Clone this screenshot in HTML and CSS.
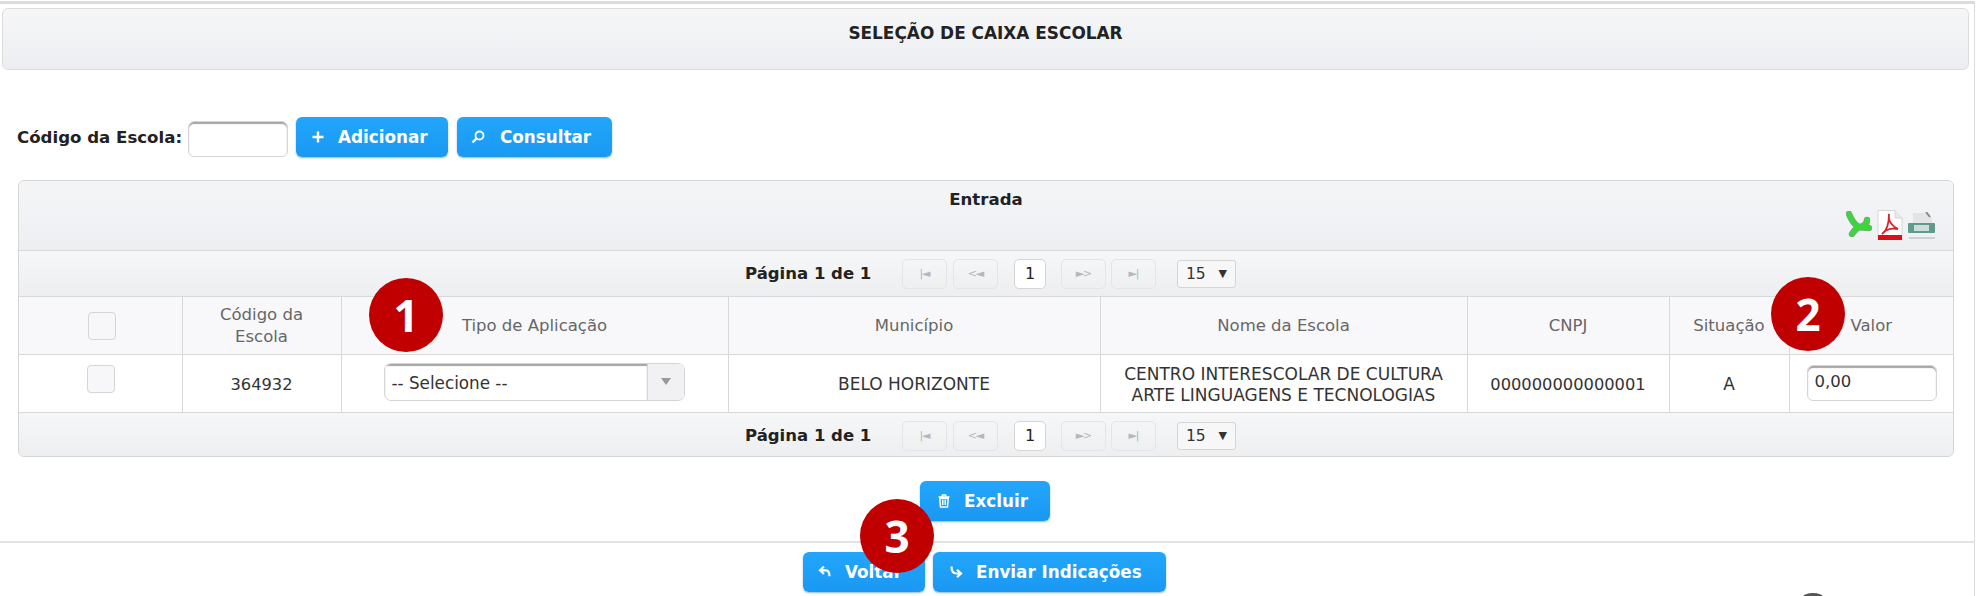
FILE: index.html
```html
<!DOCTYPE html>
<html lang="pt">
<head>
<meta charset="utf-8">
<title>Seleção de Caixa Escolar</title>
<link rel="stylesheet" href="styles.css">
</head>
<body>
<div class="page">
  <div class="title-bar">SELEÇÃO DE CAIXA ESCOLAR</div>
  <div class="search-row">
    <label class="field-label">Código da Escola:</label>
    <span class="input code-input"></span>
    <span class="btn btn-add"><svg class="ico" viewBox="0 0 16 16"><path d="M8 2.5v11M2.5 8h11" stroke="#fff" stroke-width="2.4" fill="none"/></svg>Adicionar</span>
    <span class="btn btn-search"><svg class="ico" viewBox="0 0 16 16"><circle cx="9.5" cy="6.5" r="4" stroke="#fff" stroke-width="1.8" fill="none"/><path d="M6.5 9.5 2.5 13.5" stroke="#fff" stroke-width="2.4" fill="none"/></svg>Consultar</span>
  </div>
  <div class="grid-panel">
    <div class="grid-caption">
      <span class="caption-text">Entrada</span>
      <div class="export-icons">
        <svg class="exp exp-xls" viewBox="0 0 26 26"><g fill="none" stroke-linecap="round" stroke="#7fa67f" stroke-width="6.500"><path d="M3 3C5 8 8 13 12 15.500 16 17 20 17 23 17"/><path d="M21 9C21 13 18 15 14 16 10 17 8 20 6 23"/></g><g fill="none" stroke-linecap="round" stroke="#37d837" stroke-width="4.500"><path d="M3 3C5 8 8 13 12 15.500 16 17 20 17 23 17"/><path d="M21 9C21 13 18 15 14 16 10 17 8 20 6 23"/></g></svg>
        <svg class="exp exp-pdf" viewBox="0 0 26 30"><path d="M1 .5h17L25 8v22H1Z" fill="#fff" stroke="#d5d5d5"/><path d="M18 .5V8h7" fill="#e8e8e8" stroke="#d5d5d5"/><path d="M12 4c-1 6 1 11 9 15-6-1-12 0-16 5 3-2 7-8 7-20Z" fill="none" stroke="#d8232a" stroke-width="1.800"/><rect x="1" y="25" width="24" height="5" fill="#d8101a"/></svg>
        <svg class="exp exp-csv" viewBox="0 0 28 27"><path d="M5 1h14l5 5v7H5Z" fill="#e4e4e4"/><path d="M18 0l4 5" stroke="#888" stroke-width="2"/><rect x="0" y="11" width="27" height="10" rx="1" fill="#5f9a8c"/><rect x="6" y="13" width="15" height="6" fill="#c9dfd8"/><rect x="1" y="25" width="26" height="2" fill="#d0d0d0"/></svg>
      </div>
    </div>
    <div class="pager pager-top">
      <b class="pager-text">Página 1 de 1</b>
      <span class="pg pg-a">|◄</span><span class="pg pg-b">&lt;◄</span>
      <span class="pg-cur">1</span>
      <span class="pg pg-c">►&gt;</span><span class="pg pg-d">►|</span>
      <span class="pg-size">15 <i>▼</i></span>
    </div>
    <table class="grid">
      <colgroup>
        <col class="c1"><col class="c2"><col class="c3"><col class="c4"><col class="c5"><col class="c6"><col class="c7"><col class="c8">
      </colgroup>
      <thead>
        <tr>
          <th><span class="check check-head"></span></th>
          <th>Código da<br>Escola</th>
          <th>Tipo de Aplicação</th>
          <th>Município</th>
          <th>Nome da Escola</th>
          <th>CNPJ</th>
          <th>Situação</th>
          <th>Valor</th>
        </tr>
      </thead>
      <tbody>
        <tr>
          <td><span class="check check-row"></span></td>
          <td class="num">364932</td>
          <td><div class="combo"><span class="combo-text">-- Selecione --</span><span class="combo-arrow"></span></div></td>
          <td>BELO HORIZONTE</td>
          <td>CENTRO INTERESCOLAR DE CULTURA<br>ARTE LINGUAGENS E TECNOLOGIAS</td>
          <td class="num">000000000000001</td>
          <td>A</td>
          <td><div class="input value-input">0,00</div></td>
        </tr>
      </tbody>
    </table>
    <div class="pager pager-bottom">
      <b class="pager-text">Página 1 de 1</b>
      <span class="pg pg-a">|◄</span><span class="pg pg-b">&lt;◄</span>
      <span class="pg-cur">1</span>
      <span class="pg pg-c">►&gt;</span><span class="pg pg-d">►|</span>
      <span class="pg-size">15 <i>▼</i></span>
    </div>
  </div>
  <div class="delete-row">
    <span class="btn btn-del"><svg class="ico" viewBox="0 0 16 16"><path d="M2.5 4h11M6 3.500 6.500 2h3l.5 1.500M3.800 5.500h8.400l-.7 8.500h-7Z" stroke="#fff" stroke-width="1.500" fill="none"/><path d="M6.500 7v5M8 7v5M9.500 7v5" stroke="#fff" stroke-width="1"/></svg>Excluir</span>
  </div>
  <div class="footer-row">
    <span class="btn btn-back"><svg class="ico" viewBox="0 0 16 16"><path d="M7 2.500 3 6.300l4 3.700M3.500 6.300H9c2.500 0 3.500 2 3.500 6" stroke="#fff" stroke-width="2.200" fill="none"/></svg>Voltar</span>
    <span class="btn btn-send"><svg class="ico" viewBox="0 0 16 16"><path d="M3.500 2.500c0 4.500 1.500 7 5 7h4M9 5.700l4 3.800-4 3.700" stroke="#fff" stroke-width="2.200" fill="none"/></svg>Enviar Indicações</span>
  </div>
  <span class="marker m1">1</span>
  <span class="marker m2">2</span>
  <span class="marker m3">3</span>
  <span class="cursor-tip"></span>
</div>
</body>
</html>
```
FILE: styles.css
```css
* { box-sizing: border-box; }
html, body { margin: 0; padding: 0; background: #fff; height: 596px; overflow: hidden; }
body { font-family: "DejaVu Sans", sans-serif; color: #333; }
.page {
  position: relative;
  width: 1975px;
  height: 596px;
  margin-top: 1px;
  border-top: 3px solid #dcdcdc;
  border-right: 1.5px solid #dcdcdc;
  overflow: hidden;
  padding: 4px 0 0 2px;
}
.title-bar {
  width: 1967px;
  height: 62px;
  border: 1px solid #dcdcdc;
  border-radius: 6px;
  background: linear-gradient(#f6f6f8, #eceef1);
  text-align: center;
  font-weight: bold;
  font-size: 16.900px;
  line-height: 1;
  color: #222;
  padding-top: 16px;
}
.search-row {
  display: flex;
  align-items: flex-start;
  height: 40px;
  margin-top: 47px;
  padding-left: 15px;
}
.field-label {
  width: 171px;
  font-size: 16.600px;
  font-weight: bold;
  line-height: 42px;
  color: #222;
  white-space: nowrap;
}
.input {
  display: block;
  border: 1px solid #d5d5d5;
  border-radius: 6px;
  background: #fff;
  box-shadow: inset 0 2px 1px #a5a5a5;
}
.code-input { width: 100px; height: 36px; margin-top: 4px; }
.btn {
  display: inline-flex;
  align-items: center;
  height: 40px;
  border-radius: 6px;
  background: linear-gradient(#22a6fb, #1a98f2);
  box-shadow: 0 1px 2px #8fb7d2;
  color: #fff;
  font-weight: bold;
  font-size: 16.800px;
  white-space: nowrap;
}
.ico { width: 16px; height: 16px; flex: none; margin-right: 12px; }
.btn-add { width: 152px; margin-left: 8px; padding-left: 14px; }
.btn-search { width: 155px; margin-left: 9px; padding-left: 13px; }
.btn-search .ico { margin-right: 14px; }
.grid-panel {
  width: 1936px;
  height: 277px;
  margin: 23px 0 0 16px;
  border: 1px solid #d5d5d5;
  border-radius: 6px;
  background: #f0f1f3;
  overflow: hidden;
}
.grid-caption {
  position: relative;
  height: 70px;
  border-bottom: 1px solid #d9d9d9;
  background: linear-gradient(#f4f5f7, #eeeff2);
  text-align: center;
  padding-top: 9px;
}
.caption-text { font-size: 16.600px; font-weight: bold; color: #222; }
.export-icons {
  position: absolute;
  right: 17px;
  top: 29px;
  display: flex;
  align-items: flex-start;
  gap: 5px;
}
.exp { display: block; }
.exp-xls { width: 26px; height: 26px; margin-top: 1px; }
.exp-pdf { width: 26px; height: 30px; }
.exp-csv { width: 28px; height: 27px; margin-top: 2px; }
.pager {
  display: flex;
  align-items: center;
  height: 45px;
  padding-left: 726px;
  background: linear-gradient(#f6f7f9, #eceef0);
}
.pager-text { width: 157px; font-size: 16.500px; color: #222; white-space: nowrap; }
.pg, .pg-cur {
  display: inline-flex;
  align-items: center;
  justify-content: center;
  height: 30px;
  border-radius: 5px;
  border: 1px solid #e4e5e8;
  font-size: 11px;
  color: #b5b7bb;
  letter-spacing: -1px;
}
.pg { width: 45px; }
.pg-b { margin-left: 6px; }
.pg-c { margin-left: 15px; }
.pg-d { margin-left: 5px; }
.pg-cur {
  width: 32px;
  margin-left: 16px;
  background: #fff;
  border-color: #d5d5d5;
  color: #222;
  font-size: 16px;
  letter-spacing: 0;
}
.pg-size {
  display: inline-flex;
  align-items: center;
  justify-content: space-between;
  width: 59px;
  height: 28px;
  margin-left: 21px;
  padding: 0 8px;
  border: 1px solid #d5d5d5;
  border-radius: 3px;
  background: #f7f7f8;
  font-size: 15.500px;
  color: #333;
}
.pg-size i { font-style: normal; font-size: 11px; }
.grid {
  width: 100%;
  table-layout: fixed;
  border-collapse: collapse;
  background: #fff;
}
.c1 { width: 163px; } .c2 { width: 159px; } .c3 { width: 387px; } .c4 { width: 372px; }
.c5 { width: 367px; } .c6 { width: 202px; } .c7 { width: 120px; } .c8 { width: auto; }
.grid th, .grid td {
  border: 1px solid #d8d8d8;
  text-align: center;
  padding: 0;
  vertical-align: middle;
}
.grid tr > :first-child { border-left: 0; }
.grid tr > :last-child { border-right: 0; }
.grid th { height: 58px; background: #f8f8fb; font-weight: normal; color: #666; font-size: 16.500px; line-height: 22px; }
.grid td { height: 58px; color: #333; font-size: 17px; line-height: 21px; padding-top: 2px; }
.grid td.num { font-size: 16.300px; }
.check {
  display: block;
  width: 28px;
  height: 28px;
  border: 1.500px solid #d5d5d5;
  border-radius: 4px;
  background: #f7f7fa;
}
.check-head { margin: 0 0 0 69px; }
.check-row { margin: -11px 0 0 68px; }
.combo {
  display: flex;
  width: 301px;
  height: 38px;
  margin: -6px 0 0 42px;
  border: 1px solid #d5d5d5;
  border-radius: 7px;
  overflow: hidden;
}
.combo-text {
  flex: 1;
  text-align: left;
  padding: 3px 0 0 7px;
  line-height: 32px;
  font-size: 16.800px;
  box-shadow: inset 0 2px 1px #a5a5a5;
}
.combo-arrow {
  position: relative;
  width: 37px;
  border-left: 1px solid #d5d5d5;
  background: #f1f1f3;
}
.combo-arrow::after {
  content: "";
  position: absolute;
  left: 13px;
  top: 14px;
  border: 5px solid transparent;
  border-top: 7px solid #999;
  border-bottom: 0;
}
.value-input {
  width: 130px;
  height: 36px;
  margin: -4px 0 0 17px;
  padding: 2px 0 0 7px;
  text-align: left;
  line-height: 28px;
  font-size: 16.500px;
}
.delete-row { display: flex; justify-content: center; margin-top: 24px; padding-right: 6px; }
.btn-del { width: 130px; padding-left: 16px; }
.footer-row {
  display: flex;
  height: 55px;
  margin: 20px 0 0 -2px;
  padding: 9px 0 0 803px;
  border-top: 2px solid #e2e2e2;
}
.btn-back { width: 122px; padding-left: 14px; }
.btn-send { width: 233px; margin-left: 8px; padding-left: 15px; }
.marker {
  position: absolute;
  width: 74px;
  height: 74px;
  border-radius: 50%;
  background: #c00000;
  color: #fff;
  font: bold 44px/74px "Open Sans", sans-serif;
  text-align: center;
}
.m1 { left: 369px; top: 274px; }
.m2 { left: 1771px; top: 273px; }
.m3 { left: 860px; top: 495px; }
.cursor-tip {
  position: absolute;
  left: 1803px;
  top: 589px;
  width: 20px;
  height: 8px;
  border-radius: 50% 50% 0 0;
  background: #555;
}
```
